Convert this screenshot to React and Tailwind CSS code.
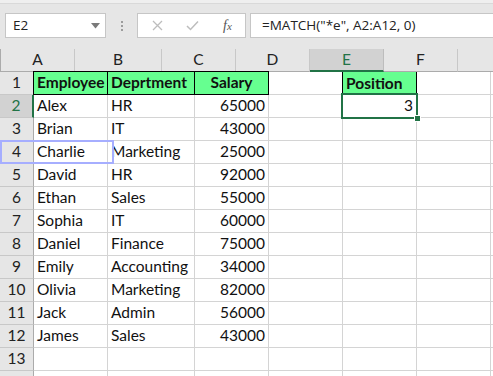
import React from 'react';

// column widths include the 1px right grid line
const COLS = [
  { key: 'A', w: 'w-[74px]' },
  { key: 'B', w: 'w-[87px]' },
  { key: 'C', w: 'w-[74px]' },
  { key: 'D', w: 'w-[74px]' },
  { key: 'E', w: 'w-[74px]' },
  { key: 'F', w: 'w-[74px]' },
  { key: 'G', w: 'w-[40px]' },
];

const DATA = [
  ['Alex', 'HR', 65000],
  ['Brian', 'IT', 43000],
  ['Charlie', 'Marketing', 25000],
  ['David', 'HR', 92000],
  ['Ethan', 'Sales', 55000],
  ['Sophia', 'IT', 60000],
  ['Daniel', 'Finance', 75000],
  ['Emily', 'Accounting', 34000],
  ['Olivia', 'Marketing', 82000],
  ['Jack', 'Admin', 56000],
  ['James', 'Sales', 43000],
];

function TopBar() {
  return (
    <div className="h-[49px] bg-[#e6e6e6] shrink-0">
      <div className="h-[4px] bg-[#efefef] border-b border-[#d9d9d9]" />
      <div className="flex items-center mt-[9px] h-[25px]">
        <div className="ml-[5px] w-[101px] h-full bg-white border border-[#c6c6c6] flex items-center justify-between pl-[7px] pr-[5px]">
          <span className="text-[13.5px] text-[#222] font-['Open_Sans',sans-serif]">E2</span>
          <svg width="9" height="6" viewBox="0 0 9 6">
            <path d="M0 0 H9 L4.5 5.5 Z" fill="#7a7a7a" />
          </svg>
        </div>
        <div className="w-[31px] flex flex-col items-center gap-[2px]">
          <span className="w-[2px] h-[2px] bg-[#9c9c9c]" />
          <span className="w-[2px] h-[2px] bg-[#9c9c9c]" />
          <span className="w-[2px] h-[2px] bg-[#9c9c9c]" />
        </div>
        <div className="w-[109px] h-full bg-white border border-[#c6c6c6] flex items-center">
          <svg className="ml-[14px]" width="11" height="11" viewBox="0 0 11 11">
            <path d="M1 1 L10 10 M10 1 L1 10" stroke="#bdbdbd" strokeWidth="1.3" />
          </svg>
          <svg className="ml-[23px]" width="13" height="11" viewBox="0 0 13 11">
            <path d="M1 6 L4.5 9.5 L12 1.5" stroke="#bdbdbd" strokeWidth="1.5" fill="none" />
          </svg>
          <span className="ml-[24px] text-[14px] italic font-['Liberation_Serif',serif] text-[#555] leading-none">
            f<span className="text-[11px]">x</span>
          </span>
        </div>
        <div className="ml-[4px] flex-1 h-full bg-white border border-[#c6c6c6] border-r-0 flex items-center pl-[11px]">
          <span className="text-[13.5px] text-[#222] font-['Open_Sans',sans-serif] whitespace-nowrap">
            =MATCH("*e", A2:A12, 0)
          </span>
        </div>
      </div>
    </div>
  );
}

function ColumnHeader() {
  return (
    <div className="flex h-[23px]">
      <div className="w-[34px] h-full bg-[#e6e6e6] border-r border-b border-[#ababab] relative">
        <svg className="absolute right-[3px] bottom-[3px]" width="15" height="15" viewBox="0 0 15 15">
          <path d="M15 0 V15 H0 Z" fill="#b7b7b7" />
        </svg>
      </div>
      {COLS.map((c) =>
        c.key === 'E' ? (
          <div
            key={c.key}
            className={`${c.w} h-full shrink-0 bg-[#d2d2d2] border-r border-[#bdbdbd] border-b-2 border-b-[#217346] flex items-center justify-center text-[#217346]`}
          >
            {c.key}
          </div>
        ) : (
          <div
            key={c.key}
            className={`${c.w} h-full shrink-0 bg-[#e6e6e6] border-r border-[#c8c8c8] border-b border-b-[#ababab] flex items-center justify-center text-[#222]`}
          >
            {c.key === 'G' ? '' : c.key}
          </div>
        )
      )}
    </div>
  );
}

function RowHeader({ n, active }) {
  if (active) {
    return (
      <div className="w-[34px] h-full shrink-0 bg-[#d2d2d2] border-b border-[#c8c8c8] border-r-2 border-r-[#217346] flex items-center justify-center text-[#217346]">
        {n}
      </div>
    );
  }
  return (
    <div className="w-[34px] h-full shrink-0 bg-[#e6e6e6] border-b border-[#c8c8c8] border-r border-r-[#ababab] flex items-center justify-center text-[#222]">
      {n}
    </div>
  );
}

function Cell({ w, children, right, className = '' }) {
  return (
    <div
      className={`${w} h-full shrink-0 border-r border-b border-[#d4d4d4] flex items-center whitespace-nowrap overflow-visible ${
        right ? 'justify-end pr-[3px]' : 'pl-[3px]'
      } ${className}`}
    >
      {children}
    </div>
  );
}

function HeaderRow() {
  return (
    <div className="flex h-[23px]">
      <RowHeader n={1} />
      <div className="w-[74px] shrink-0 h-full flex">
        <div className="w-[75px] shrink-0 bg-[#66ff90] font-bold border border-black -ml-px pl-[3px] flex items-center h-[24px] -mt-px">
          Employee
        </div>
      </div>
      <div className="w-[87px] shrink-0 h-full flex">
        <div className="w-[88px] shrink-0 bg-[#66ff90] font-bold border border-black -ml-px pl-[3px] flex items-center h-[24px] -mt-px">
          Deprtment
        </div>
      </div>
      <div className="w-[74px] shrink-0 h-full flex">
        <div className="w-[75px] shrink-0 bg-[#66ff90] font-bold border border-black -ml-px flex items-center justify-center h-[24px] -mt-px">
          Salary
        </div>
      </div>
      <Cell w="w-[74px]" />
      <div className="w-[74px] shrink-0 h-full flex">
        <div className="w-[75px] shrink-0 bg-[#66ff90] font-bold border-x border-black -ml-px pl-[3px] flex items-center h-[23px]">
          Position
        </div>
      </div>
      <Cell w="w-[74px]" />
      <Cell w="w-[40px]" />
    </div>
  );
}

export default function App() {
  return (
    <div className="w-[493px] h-[376px] overflow-hidden bg-white relative font-['Lato',sans-serif] text-[15.5px] text-[#111] flex flex-col">
      <TopBar />
      <ColumnHeader />
      <HeaderRow />
      {DATA.map((r, i) => {
        const n = i + 2;
        return (
          <div key={n} className="flex h-[23px] shrink-0">
            <RowHeader n={n} active={n === 2} />
            <Cell w="w-[74px]">{r[0]}</Cell>
            <Cell w="w-[87px]">{r[1]}</Cell>
            <Cell w="w-[74px]" right>{r[2]}</Cell>
            <Cell w="w-[74px]" />
            <Cell w="w-[74px]" right>{n === 2 ? 3 : ''}</Cell>
            <Cell w="w-[74px]" />
            <Cell w="w-[40px]" />
          </div>
        );
      })}
      <div className="flex h-[23px] shrink-0">
        <RowHeader n={13} />
        {COLS.map((c) => (
          <Cell key={c.key} w={c.w} />
        ))}
      </div>
      <div className="flex h-[23px] shrink-0">
        <RowHeader n="" />
        {COLS.map((c) => (
          <Cell key={c.key} w={c.w} />
        ))}
      </div>

      {/* active cell E2 */}
      <div className="absolute left-[341px] top-[93px] w-[77px] h-[26px] border-2 border-[#217346] pointer-events-none" />
      <div className="absolute left-[414px] top-[115px] w-[7px] h-[7px] bg-[#217346] border border-white" />
      {/* highlight around row 4 */}
      <div className="absolute left-0 top-[140px] w-[114px] h-[24px] border-2 border-[#a6aeff] pointer-events-none" />
    </div>
  );
}
